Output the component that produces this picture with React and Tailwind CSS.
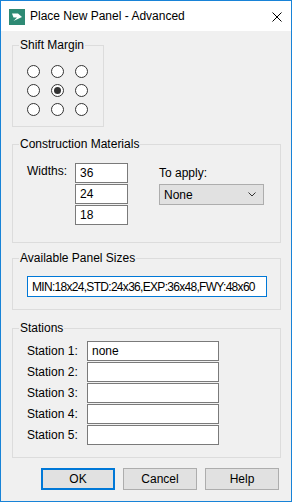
import React from "react";

const Radio = ({ checked }) => (
  <span className="w-[13px] h-[13px] rounded-full border border-[#333333] bg-white flex items-center justify-center">
    {checked && <span className="w-[7px] h-[7px] rounded-full bg-[#333333]" />}
  </span>
);

const Field = ({ value, className = "" }) => (
  <input
    readOnly
    defaultValue={value}
    className={`h-[20px] border border-[#7a7a7a] bg-white px-[4px] text-[12px] leading-[18px] outline-none ${className}`}
  />
);

const Group = ({ title, className = "", children }) => (
  <fieldset className={`border border-[#dcdcdc] p-0 m-0 ${className}`}>
    <legend className="ml-[6px] px-[1px] leading-[15px]">{title}</legend>
    {children}
  </fieldset>
);

const Button = ({ children, primary }) => (
  <button
    className={`w-[74px] h-[22px] bg-[#e1e1e1] text-[12px] flex items-center justify-center ${
      primary ? "border-2 border-[#0078d7]" : "border border-[#adadad]"
    }`}
  >
    {children}
  </button>
);

export default function App() {
  const grid = [false, false, false, false, true, false, false, false, false];
  const stations = ["none", "", "", "", ""];

  return (
    <div className="w-[292px] h-[502px] border border-[#1883d7] bg-[#f0f0f0] flex flex-col font-['Liberation_Sans',Arial,sans-serif] text-[12px] text-black">
      {/* title bar */}
      <div className="h-[30px] bg-white flex items-center shrink-0">
        <svg width="16" height="16" viewBox="0 0 16 16" className="ml-[8px] mt-[2px]">
          <rect width="16" height="16" fill="#2e8a74" />
          <path d="M3 4.5 H9 L13 8 L4.5 12 L8 8.5 H4.5 Z" fill="#ffffff" />
        </svg>
        <span className="ml-[5px]">Place New Panel - Advanced</span>
        <svg width="10" height="10" viewBox="0 0 10 10" className="ml-auto mr-[9px] mt-[1px]">
          <path d="M0.5 0.5 L9.5 9.5 M9.5 0.5 L0.5 9.5" stroke="#000" strokeWidth="1" />
        </svg>
      </div>

      <div className="flex-1 pl-[11px] pr-[10px] pt-[7px] flex flex-col">
        <Group title="Shift Margin" className="w-[92px]">
          <div className="pt-[12px] pb-[10px] pl-[14px] grid grid-cols-[13px_13px_13px] gap-x-[11px] gap-y-[6px]">
            {grid.map((c, i) => (
              <Radio key={i} checked={c} />
            ))}
          </div>
        </Group>

        <Group title="Construction Materials" className="mt-[10px]">
          <div className="flex pt-[11px] pb-[17px] pl-[14px]">
            <span className="w-[48px] leading-[15px] pt-[1px]">Widths:</span>
            <div className="flex flex-col gap-[1px]">
              <Field value="36" className="w-[53px]" />
              <Field value="24" className="w-[53px]" />
              <Field value="18" className="w-[53px]" />
            </div>
            <div className="ml-[31px] pt-[3px] flex flex-col">
              <span className="leading-[15px] mb-[3px]">To apply:</span>
              <div className="w-[105px] h-[21px] border border-[#adadad] bg-[#e1e1e1] flex items-center pl-[4px] pr-[7px]">
                <span>None</span>
                <svg width="8" height="5" viewBox="0 0 8 5" className="ml-auto">
                  <path d="M0.5 0.5 L4 4 L7.5 0.5" fill="none" stroke="#333" strokeWidth="1" />
                </svg>
              </div>
            </div>
          </div>
        </Group>

        <Group title="Available Panel Sizes" className="mt-[8px]">
          <div className="pt-[10px] pb-[12px] pl-[14px]">
            <input
              readOnly
              defaultValue="MIN:18x24,STD:24x36,EXP:36x48,FWY:48x60"
              className="w-[240px] h-[21px] border border-[#0078d7] bg-white px-[4px] text-[12px] tracking-[-0.7px] outline-none"
            />
          </div>
        </Group>

        <Group title="Stations" className="mt-[11px]">
          <div className="pt-[5px] pb-[12px] pl-[14px] flex flex-col gap-[1px]">
            {stations.map((s, i) => (
              <div key={i} className="flex items-center">
                <span className="w-[60px]">Station {i + 1}:</span>
                <Field value={s} className="w-[132px]" />
              </div>
            ))}
          </div>
        </Group>

        <div className="mt-[10px] flex gap-[8px] pl-[29px]">
          <Button primary>OK</Button>
          <Button>Cancel</Button>
          <Button>Help</Button>
        </div>
      </div>
    </div>
  );
}
